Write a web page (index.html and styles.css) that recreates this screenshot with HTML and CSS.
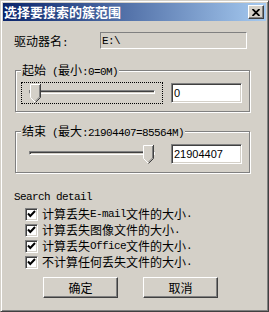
FILE: index.html
```html
<!DOCTYPE html>
<html lang="zh">
<head>
    <meta charset="utf-8">
    <title>选择要搜索的簇范围</title>
    <link rel="stylesheet" href="styles.css">
</head>
<body>
    <div class="window">
        <div class="titlebar">
            <span class="title">选择要搜索的簇范围</span>
            <button type="button" class="close">
                <svg width="8" height="7" viewBox="0 0 8 7"><path d="M0.5 0 L7.5 7 M7.5 0 L0.5 7" stroke="#000" stroke-width="1.8"/></svg>
            </button>
        </div>

        <div class="content">
            <div class="drive-row">
                <span class="label">驱动器名<span class="a">:</span></span>
                <div class="field readonly"><span class="a">E:\</span></div>
            </div>

            <!-- start cluster -->
            <fieldset class="group">
                <legend>起始<span class="a"> (</span>最小<span class="a">:0=0M)</span></legend>
                <div class="range-row">
                    <div class="slider focus">
                        <div class="track"></div>
                        <svg class="thumb" style="left:8px" width="11" height="19" viewBox="0 0 11 19">
                            <polygon points="0,0 11,0 11,13 5.5,18.5 0,13" fill="#d4d0c8"/>
                            <polyline points="5,18 0.5,13.5 0.5,0.5 10,0.5" fill="none" stroke="#fff"/>
                            <polyline points="10.5,0 10.5,13.5 5.5,18.5" fill="none" stroke="#404040"/>
                            <polyline points="9.5,1 9.5,13 5.5,17" fill="none" stroke="#808080"/>
                        </svg>
                    </div>
                    <div class="field edit">0</div>
                </div>
            </fieldset>

            <!-- end cluster -->
            <fieldset class="group">
                <legend>结束<span class="a"> (</span>最大<span class="a">:21904407=85564M)</span></legend>
                <div class="range-row">
                    <div class="slider">
                        <div class="track"></div>
                        <svg class="thumb" style="left:121px" width="11" height="19" viewBox="0 0 11 19">
                            <polygon points="0,0 11,0 11,13 5.5,18.5 0,13" fill="#d4d0c8"/>
                            <polyline points="5,18 0.5,13.5 0.5,0.5 10,0.5" fill="none" stroke="#fff"/>
                            <polyline points="10.5,0 10.5,13.5 5.5,18.5" fill="none" stroke="#404040"/>
                            <polyline points="9.5,1 9.5,13 5.5,17" fill="none" stroke="#808080"/>
                        </svg>
                    </div>
                    <div class="field edit">21904407</div>
                </div>
            </fieldset>

            <div class="detail-title a">Search detail</div>
            <ul class="checks">
                <li><span class="checkbox"><svg width="9" height="9" viewBox="0 0 9 9"><path d="M1 3.5 L3.3 6 L8 1" fill="none" stroke="#000" stroke-width="2"/></svg></span>计算丢失<span class="a">E-mail</span>文件的大小<span class="a">.</span></li>
                <li><span class="checkbox"><svg width="9" height="9" viewBox="0 0 9 9"><path d="M1 3.5 L3.3 6 L8 1" fill="none" stroke="#000" stroke-width="2"/></svg></span>计算丢失图像文件的大小<span class="a">.</span></li>
                <li><span class="checkbox"><svg width="9" height="9" viewBox="0 0 9 9"><path d="M1 3.5 L3.3 6 L8 1" fill="none" stroke="#000" stroke-width="2"/></svg></span>计算丢失<span class="a">Office</span>文件的大小<span class="a">.</span></li>
                <li><span class="checkbox"><svg width="9" height="9" viewBox="0 0 9 9"><path d="M1 3.5 L3.3 6 L8 1" fill="none" stroke="#000" stroke-width="2"/></svg></span>不计算任何丢失文件的大小<span class="a">.</span></li>
            </ul>

            <div class="buttons">
                <button type="button" class="btn">确定</button>
                <button type="button" class="btn">取消</button>
            </div>
        </div>
    </div>
</body>
</html>
```

FILE: styles.css
```css
* {
    box-sizing: border-box;
}
body {
    margin: 0;
    background-color: #d4d0c8;
    font-family: "Noto Sans CJK SC", sans-serif;
    font-size: 12px;
    color: #000;
}
/* ascii runs: narrow fixed-width like the old system font */
.a {
    font-family: "Liberation Mono", monospace;
    font-size: 11px;
    letter-spacing: -0.6px;
}

.window {
    width: 269px;
    height: 312px;
    padding: 2px;
    background-color: #d4d0c8;
    border: 1px solid;
    border-color: #d4d0c8 #404040 #404040 #d4d0c8;
    box-shadow: inset 1px 1px #fff, inset -1px -1px #808080;
}

.titlebar {
    display: flex;
    align-items: center;
    justify-content: space-between;
    height: 18px;
    padding: 0 2px 0 1px;
    background: linear-gradient(to right, #0a246a, #a6caf0);
}
.title {
    color: #fff;
    font-weight: bold;
    font-size: 13px;
    line-height: 18px;
}
.close {
    display: flex;
    align-items: center;
    justify-content: center;
    width: 16px;
    height: 14px;
    padding: 0;
    background-color: #d4d0c8;
    border: 1px solid;
    border-color: #fff #404040 #404040 #fff;
    box-shadow: inset -1px -1px #808080;
}

.content {
    padding-left: 11px;
}

.drive-row {
    display: flex;
    align-items: center;
    margin-top: 11px;
    height: 17px;
}
.label {
    width: 86px;
}

.field {
    display: flex;
    align-items: center;
    padding-left: 1px;
    border: 1px solid;
    border-color: #808080 #fff #fff #808080;
}
.readonly {
    width: 147px;
    height: 17px;
    background-color: #d4d0c8;
}
.edit {
    width: 71px;
    height: 20px;
    margin-left: 8px;
    background-color: #fff;
    box-shadow: inset 1px 1px #404040, inset -1px -1px #d4d0c8;
    font-family: "Liberation Sans", sans-serif;
    font-size: 11px;
    padding-left: 2px;
}

.group {
    width: 235px;
    margin: 14px 0 0 1px;
    padding: 5px 0 7px 5px;
    border: 1px solid #808080;
    box-shadow: 1px 1px #fff, inset 1px 1px #fff;
    min-inline-size: 0;
}
.group + .group {
    margin-top: 12px;
}
.group legend {
    height: 14px;
    padding: 0 1px;
    line-height: 14px;
    background-color: #d4d0c8;
}

.range-row {
    display: flex;
    align-items: center;
}
.slider {
    position: relative;
    width: 142px;
    height: 22px;
    border: 1px dotted transparent;
}
.slider.focus {
    border-color: #000;
}
.track {
    width: 126px;
    height: 4px;
    margin: 7px 0 0 7px;
    background-color: #d4d0c8;
    border: 1px solid;
    border-color: #808080 #fff #fff #808080;
    box-shadow: inset 1px 1px #404040;
}
.thumb {
    position: absolute;
    top: 1px;
}

.detail-title {
    height: 14px;
    margin-top: 17px;
    line-height: 14px;
}

.checks {
    list-style: none;
    margin: 2px 0 0;
    padding: 0 0 0 11px;
}
.checks li {
    display: flex;
    align-items: center;
    height: 16px;
    line-height: 16px;
    white-space: nowrap;
}
.checkbox {
    display: flex;
    align-items: center;
    justify-content: center;
    width: 13px;
    height: 13px;
    margin-right: 4px;
    background-color: #fff;
    border: 1px solid;
    border-color: #808080 #fff #fff #808080;
    box-shadow: inset 1px 1px #404040, inset -1px -1px #d4d0c8;
}

.buttons {
    display: flex;
    gap: 25px;
    margin-top: 7px;
    padding-left: 29px;
}
.btn {
    width: 75px;
    height: 21px;
    padding: 0;
    background-color: #d4d0c8;
    border: 1px solid;
    border-color: #fff #404040 #404040 #fff;
    box-shadow: inset -1px -1px #808080;
    font-family: "Noto Sans CJK SC", sans-serif;
    font-size: 12px;
    line-height: 17px;
    color: #000;
}
```
